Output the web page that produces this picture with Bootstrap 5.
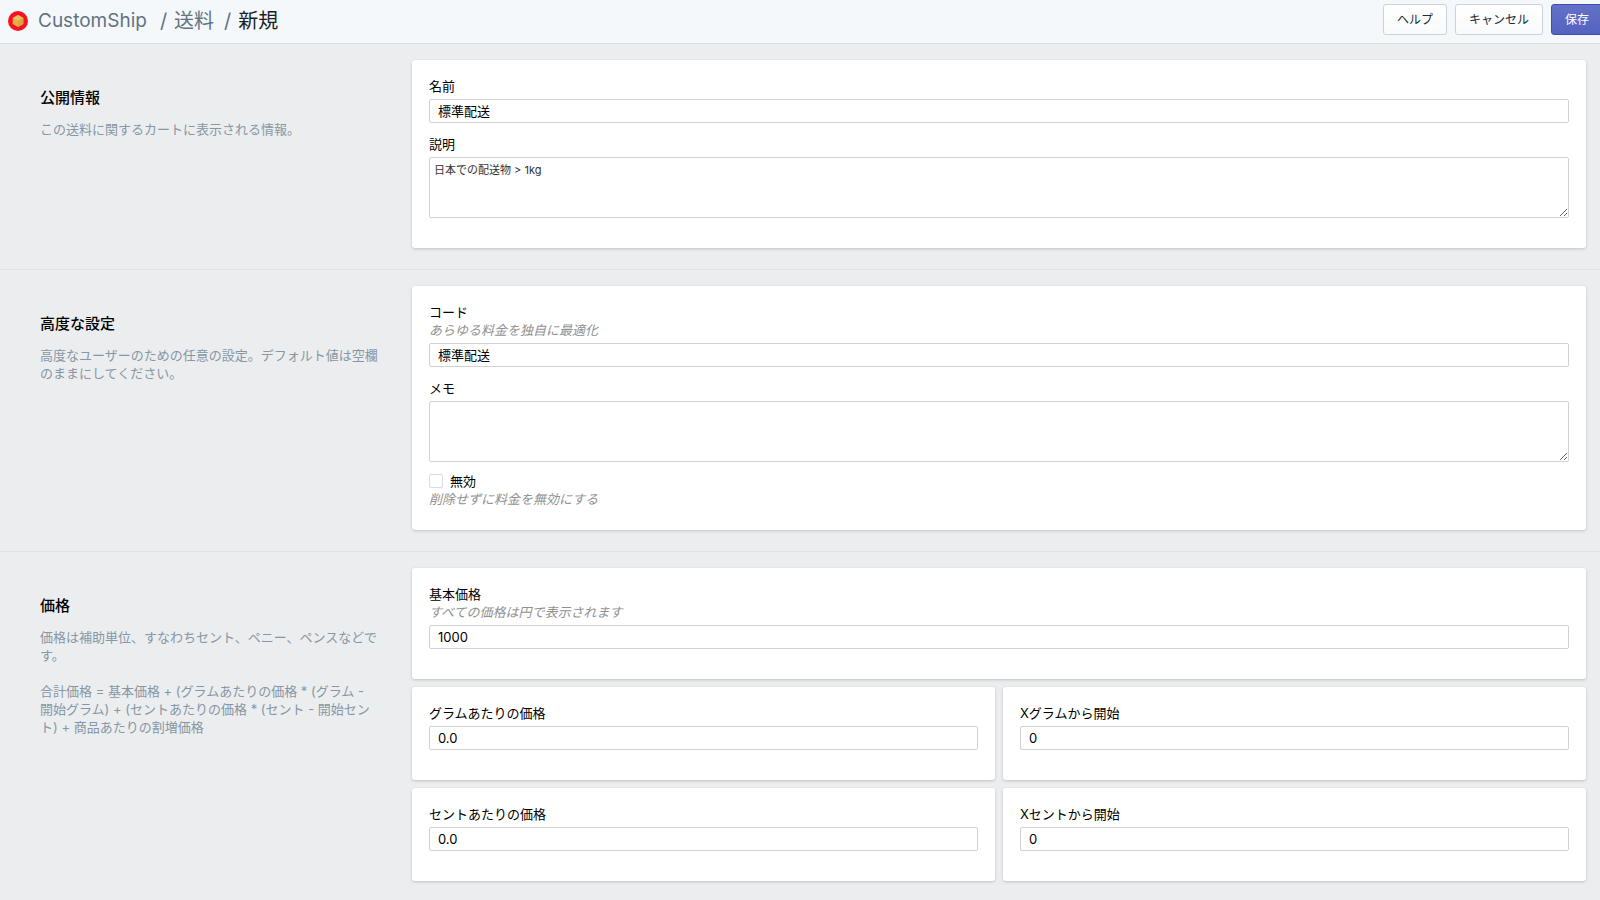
<!DOCTYPE html>
<html lang="ja">
<head>
<meta charset="utf-8">
<meta name="viewport" content="width=device-width, initial-scale=1">
<title>CustomShip / 送料 / 新規</title>
<link href="https://cdn.jsdelivr.net/npm/bootstrap@5.3.0/dist/css/bootstrap.min.css" rel="stylesheet">
<style>
  body {
    font-family: Inter, "Noto Sans CJK JP", sans-serif;
    font-size: 13px;
    line-height: 18px;
    color: #000;
    background: #ebedef;
  }
  .topbar { height: 44px; padding-left: 8px; background: #f5f8fa; border-bottom: 1px solid #d9dde1; }
  .crumbs { font-size: 20px; line-height: 28px; padding-bottom: 2px; color: #637381; }
  .crumbs a { color: inherit; text-decoration: none; }
  .crumbs .here { color: #1c2126; }
  .crumbs .app-name { margin: 0 13px 0 10px; font-size: 19px; }
  .slash { margin-right: 7px; }
  .slash-next { margin-left: 10px; }
  .actions { margin: 4px -3px 8px 0; }
  .actions .btn {
    height: 31px; padding: 0 13px; font-size: 12px; line-height: 18px;
    border-radius: 3px; color: #212b36;
    background: linear-gradient(#fff, #f9fafb); border: 1px solid #cdd3da;
  }
  .actions .btn-save { color: #fff; background: linear-gradient(#6371c7, #5563c1); border-color: #3f4eae; }
  .band {
    display: grid; grid-template-columns: 372fr 1174fr;
    padding: 16px 14px 21px 40px; border-bottom: 1px solid #dfe3e8;
  }
  .band:last-child { border-bottom: 0; }
  .about { padding: 28px 33px 0 0; color: #8797a5; }
  .about h2 { font-size: 15px; line-height: 20px; font-weight: 500; color: #000; margin: 0 0 12px; }
  .about p { margin: 0 0 18px; }
  .panel { padding: 17px 17px 18px; background: #fff; border: 0; border-radius: 3px; box-shadow: 0 1px 3px rgba(63, 63, 68, .25); }
  .field { margin-bottom: 12px; }
  .field-tight { margin-bottom: 10px; }
  .field-last { margin-bottom: 4px; }
  .field label { display: block; }
  .hint { font-style: italic; color: #919191; }
  .field .form-control {
    margin-top: 4px; height: 24px; padding: 0 8px 1px; font-size: 13px; line-height: 18px;
    color: #000; border: 1px solid #d0d2d4; border-radius: 2px;
  }
  .field textarea.form-control { height: 61px; min-height: 61px; padding: 4px; font-size: 11px; line-height: 16px; color: #333; }
  .field .form-check-input { width: 14px; height: 14px; margin: 0 7px 0 0; border: 1px solid #d8dde2; border-radius: 2px; }
</style>
</head>
<body>
<header class="topbar d-flex align-items-center justify-content-between overflow-hidden">
  <nav class="crumbs d-flex align-items-center" aria-label="パンくずリスト">
    <svg width="20" height="20" viewBox="0 0 20 20" aria-hidden="true">
      <circle cx="10" cy="10" r="10" fill="#f5131f"/>
      <path d="M10 4l5.300 3v6L10 16l-5.300-3V7z" fill="#e5ae48"/>
      <path d="M10 4l5.300 3L10 10 4.700 7z" fill="#ecbd62"/>
      <path d="M10 10l5.300-3v6L10 16z" fill="#e0a23c"/>
    </svg>
    <a class="app-name" href="#">CustomShip</a>
    <span class="slash">/</span>
    <a href="#">送料</a>
    <span class="slash slash-next">/</span>
    <span class="here">新規</span>
  </nav>
  <div class="actions d-flex gap-2 flex-shrink-0">
    <button type="button" class="btn">ヘルプ</button>
    <button type="button" class="btn">キャンセル</button>
    <button type="submit" form="rate" class="btn btn-save">保存</button>
  </div>
</header>

<form id="rate">
  <section class="band">
    <div class="about">
      <h2>公開情報</h2>
      <p>この送料に関するカートに表示される情報。</p>
    </div>
    <div class="card panel">
      <div class="field">
        <label for="name">名前</label>
        <input type="text" class="form-control" id="name" value="標準配送">
      </div>
      <div class="field">
        <label for="description">説明</label>
        <textarea class="form-control" id="description">日本での配送物 &gt; 1kg</textarea>
      </div>
    </div>
  </section>

  <section class="band">
    <div class="about">
      <h2>高度な設定</h2>
      <p>高度なユーザーのための任意の設定。デフォルト値は空欄のままにしてください。</p>
    </div>
    <div class="card panel">
      <div class="field">
        <label for="code">コード</label>
        <div class="hint">あらゆる料金を独自に最適化</div>
        <input type="text" class="form-control" id="code" value="標準配送">
      </div>
      <div class="field field-tight">
        <label for="memo">メモ</label>
        <textarea class="form-control" id="memo"></textarea>
      </div>
      <div class="field field-last">
        <div class="d-flex align-items-center">
          <input type="checkbox" class="form-check-input" id="disabled">
          <label for="disabled">無効</label>
        </div>
        <div class="hint">削除せずに料金を無効にする</div>
      </div>
    </div>
  </section>

  <section class="band">
    <div class="about">
      <h2>価格</h2>
      <p>価格は補助単位、すなわちセント、ペニー、ペンスなどです。</p>
      <p>合計価格 = 基本価格 + (グラムあたりの価格 * (グラム - 開始グラム) + (セントあたりの価格 * (セント - 開始セント) + 商品あたりの割増価格</p>
    </div>
    <div>
      <div class="row g-2">
        <div class="col-12">
          <div class="card panel">
            <div class="field">
              <label for="base">基本価格</label>
              <div class="hint">すべての価格は円で表示されます</div>
              <input type="text" class="form-control" id="base" value="1000">
            </div>
          </div>
        </div>
        <div class="col-6">
          <div class="card panel">
            <div class="field">
              <label for="per-gram">グラムあたりの価格</label>
              <input type="text" class="form-control" id="per-gram" value="0.0">
            </div>
          </div>
        </div>
        <div class="col-6">
          <div class="card panel">
            <div class="field">
              <label for="from-gram">Xグラムから開始</label>
              <input type="text" class="form-control" id="from-gram" value="0">
            </div>
          </div>
        </div>
        <div class="col-6">
          <div class="card panel">
            <div class="field">
              <label for="per-cent">セントあたりの価格</label>
              <input type="text" class="form-control" id="per-cent" value="0.0">
            </div>
          </div>
        </div>
        <div class="col-6">
          <div class="card panel">
            <div class="field">
              <label for="from-cent">Xセントから開始</label>
              <input type="text" class="form-control" id="from-cent" value="0">
            </div>
          </div>
        </div>
      </div>
    </div>
  </section>
</form>
<script src="https://cdn.jsdelivr.net/npm/bootstrap@5.3.0/dist/js/bootstrap.bundle.min.js"></script>
</body>
</html>
